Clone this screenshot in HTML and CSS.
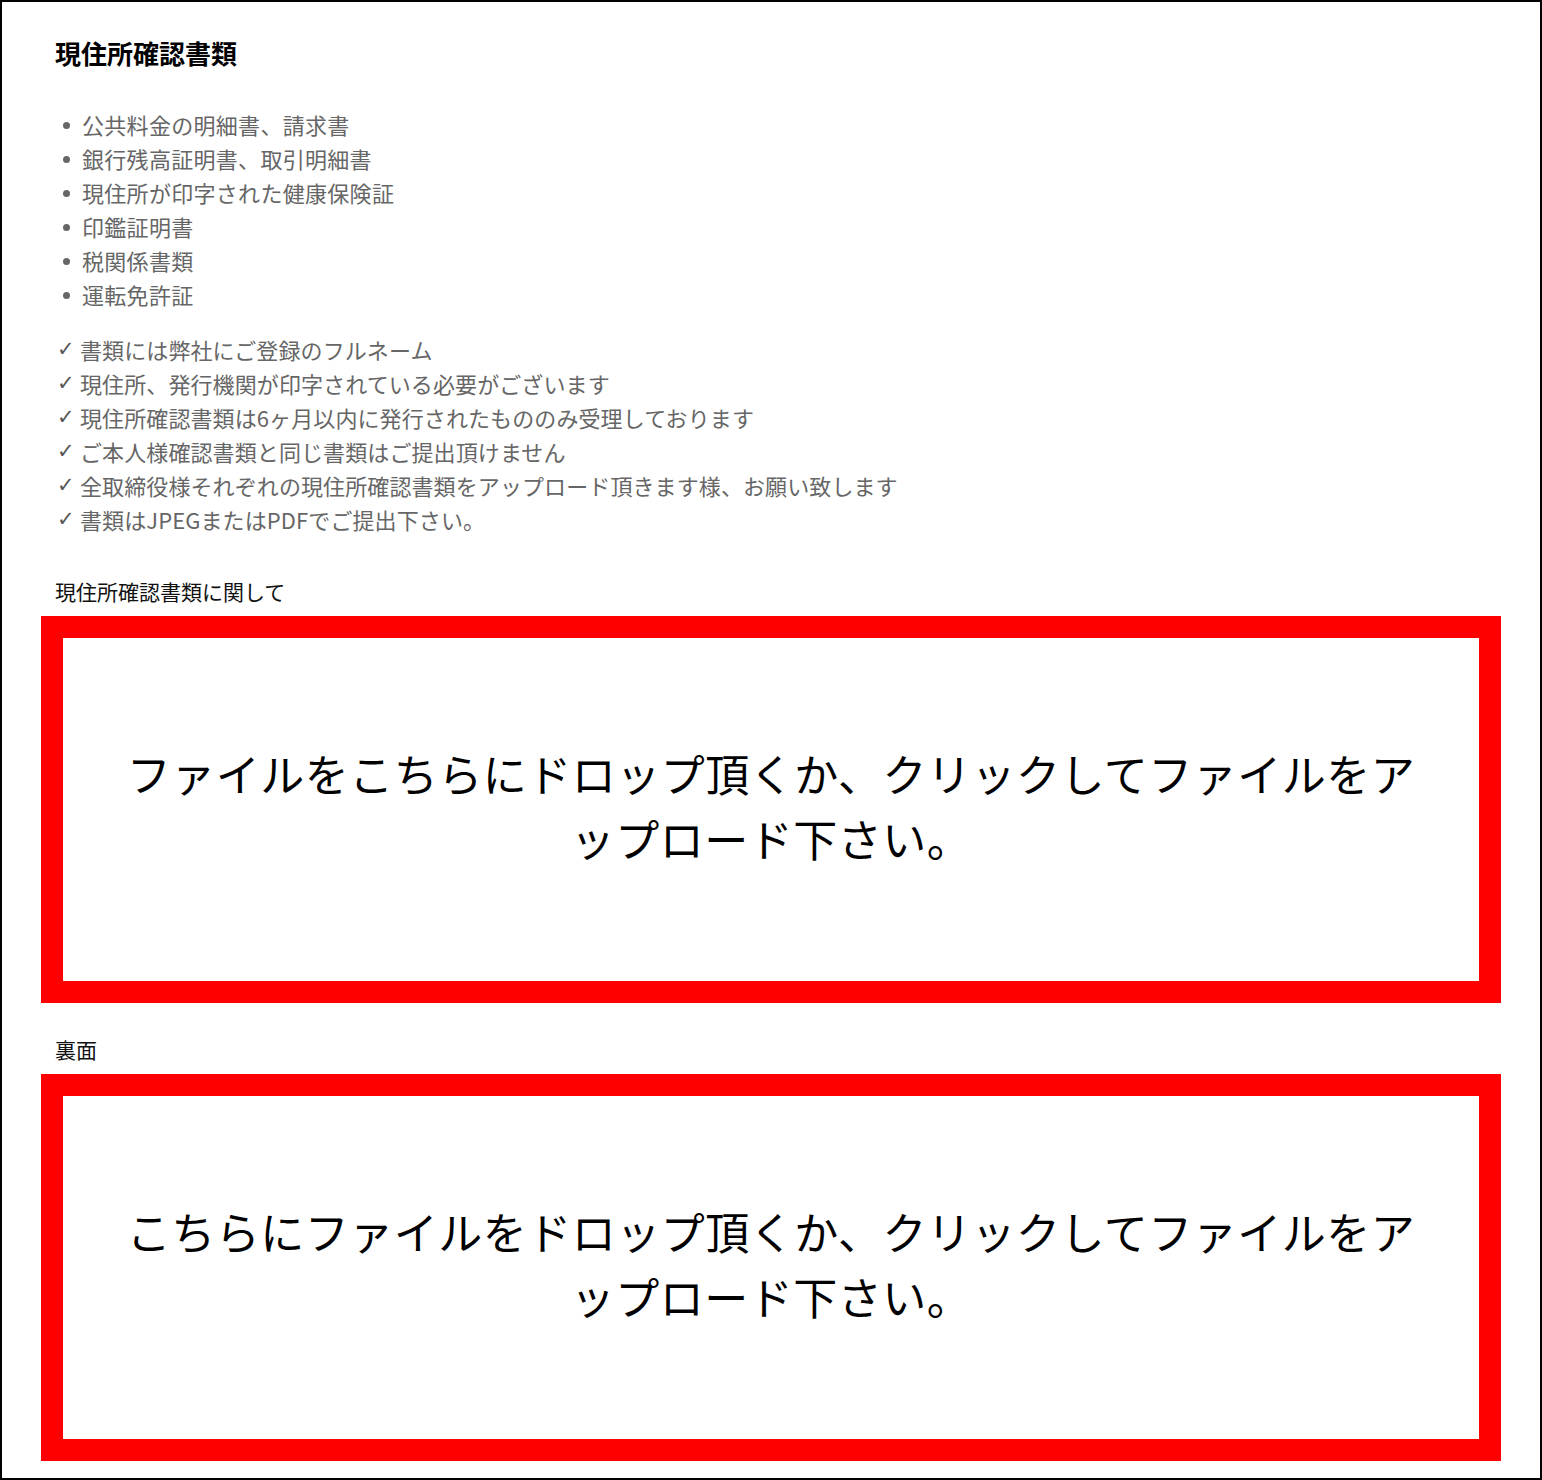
FILE: index.html
```html
<!DOCTYPE html>
<html lang="ja">
<head>
<meta charset="utf-8">
<title>現住所確認書類</title>
<link rel="stylesheet" href="styles.css">
</head>
<body>
<div class="page">
  <h1 class="title">現住所確認書類</h1>
  <ul class="docs">
    <li>公共料金の明細書、請求書</li>
    <li>銀行残高証明書、取引明細書</li>
    <li>現住所が印字された健康保険証</li>
    <li>印鑑証明書</li>
    <li>税関係書類</li>
    <li>運転免許証</li>
  </ul>
  <ul class="checks">
    <li><span class="mark">✓</span><span>書類には弊社にご登録のフルネーム</span></li>
    <li><span class="mark">✓</span><span>現住所、発行機関が印字されている必要がございます</span></li>
    <li><span class="mark">✓</span><span>現住所確認書類は6ヶ月以内に発行されたもののみ受理しております</span></li>
    <li><span class="mark">✓</span><span>ご本人様確認書類と同じ書類はご提出頂けません</span></li>
    <li><span class="mark">✓</span><span>全取締役様それぞれの現住所確認書類をアップロード頂きます様、お願い致します</span></li>
    <li><span class="mark">✓</span><span>書類はJPEGまたはPDFでご提出下さい。</span></li>
  </ul>
  <div class="label label-first">現住所確認書類に関して</div>
  <div class="dropzone"><p>ファイルをこちらにドロップ頂くか、クリックしてファイルをアップロード下さい。</p></div>
  <div class="label label-second">裏面</div>
  <div class="dropzone"><p>こちらにファイルをドロップ頂くか、クリックしてファイルをアップロード下さい。</p></div>
</div>
</body>
</html>
```
FILE: styles.css
```css
html, body {
  margin: 0;
  padding: 0;
  background: #fff;
}
body {
  font-family: "Noto Sans CJK JP", "Noto Sans", sans-serif;
}
.page {
  box-sizing: border-box;
  width: 1542px;
  height: 1480px;
  border: 2px solid #000;
  padding: 34px 39px 0;
  overflow: hidden;
}
.title {
  margin: 0;
  padding-left: 14px;
  font-size: 26px;
  line-height: 34px;
  font-weight: 700;
  color: #000;
}
.docs {
  list-style: none;
  margin: 37px 0 0;
  padding: 0 0 0 41px;
  font-size: 22px;
  line-height: 34px;
  letter-spacing: 0.3px;
  color: #666;
}
.docs li {
  position: relative;
}
.docs li::before {
  content: "";
  position: absolute;
  left: -19px;
  top: 15px;
  width: 7px;
  height: 7px;
  border-radius: 50%;
  background: #666;
}
.checks {
  list-style: none;
  margin: 21px 0 0;
  padding: 0 0 0 16px;
  font-size: 22px;
  line-height: 34px;
  letter-spacing: 0.1px;
  color: #666;
}
.checks li {
  display: flex;
}
.mark {
  width: 23px;
  flex: none;
  font-family: "DejaVu Sans", sans-serif;
  font-size: 21px;
  line-height: 34px;
  color: #555;
}
.label {
  padding-left: 14px;
  font-size: 21px;
  line-height: 28px;
  color: #111;
  margin-bottom: 11px;
}
.label-first {
  margin-top: 41px;
}
.label-second {
  margin-top: 32px;
}
.dropzone {
  box-sizing: border-box;
  height: 387px;
  border: 22px solid #ff0000;
  display: flex;
  align-items: center;
  justify-content: center;
  padding: 0 58px 8px;
}
.dropzone p {
  margin: 0;
  font-size: 44px;
  line-height: 65px;
  letter-spacing: 0.5px;
  text-align: center;
  color: #000;
}
```
